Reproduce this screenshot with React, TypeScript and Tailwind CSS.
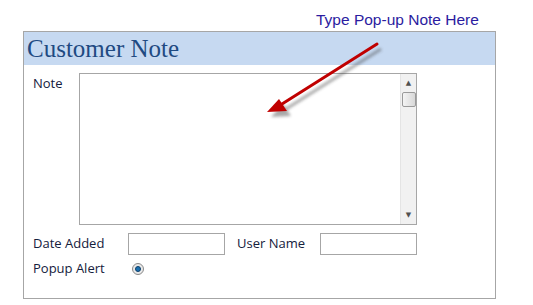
import React from 'react';

const labelFont = { fontFamily: '"Open Sans", "DejaVu Sans", sans-serif' };

const Arrow = () => (
  <svg className="absolute left-0 top-0 pointer-events-none" width="533" height="305" viewBox="0 0 533 305">
    <defs>
      <filter id="shadow" x="-20%" y="-20%" width="140%" height="140%">
        <feGaussianBlur stdDeviation="1.8" />
      </filter>
    </defs>
    <g transform="translate(4 5)" opacity="0.45" filter="url(#shadow)">
      <line x1="377" y1="44" x2="282" y2="104" stroke="#404040" strokeWidth="3" />
      <polygon points="267,112 279,99 287,111" fill="#404040" />
    </g>
    <line x1="377" y1="44" x2="282" y2="104" stroke="#c00000" strokeWidth="3" strokeLinecap="round" />
    <polygon points="267,112 279,99 287,111" fill="#c00000" />
  </svg>
);

const Scrollbar = () => (
  <div className="w-[16px] h-full bg-[#f1f1f1] border-l border-[#e4e4e4] flex flex-col items-center">
    <div className="h-[17px] flex items-center justify-center text-[7px] text-[#505050] mt-[1px]">▲</div>
    <div className="w-[14px] h-[15px] rounded-[2px] border border-[#9a9a9a] bg-gradient-to-r from-[#f4f4f4] to-[#d8d8d8]" />
    <div className="flex-1" />
    <div className="h-[17px] flex items-center justify-center text-[7px] text-[#505050]">▼</div>
  </div>
);

export default function App() {
  return (
    <div className="relative w-[533px] h-[305px] bg-white overflow-hidden">
      <div
        className="absolute left-[316px] top-[8px] text-[15.5px] text-[#2b1ca0]"
        style={{ fontFamily: '"Liberation Sans", Arial, sans-serif' }}
      >
        Type Pop-up Note Here
      </div>

      <div className="ml-[23px] pt-[31px]">
        <div className="w-[473px] h-[268px] border border-[#a6a6a6] flex flex-col">
          <div className="h-[33px] bg-[#c6d9f1] flex items-center px-[3px]">
            <span
              className="text-[25px] leading-none text-[#1f4a82]"
              style={{ fontFamily: '"Liberation Serif", "DejaVu Serif", serif' }}
            >
              Customer Note
            </span>
          </div>

          <div className="pl-[9px] pt-[8px] flex flex-col" style={labelFont}>
            <div className="flex">
              <div className="w-[46px] pt-[1px] text-[13px] text-[#14203c]">Note</div>
              <div className="w-[338px] h-[152px] border border-[#a6a6a6] bg-white flex justify-end">
                <Scrollbar />
              </div>
            </div>

            <div className="flex items-center mt-[8px] h-[22px]">
              <div className="w-[95px] text-[13px] text-[#14203c]">Date Added</div>
              <div className="w-[97px] h-[22px] border border-[#a6a6a6]" />
              <div className="w-[95px] pl-[12px] text-[13px] text-[#14203c]">User Name</div>
              <div className="w-[97px] h-[22px] border border-[#a6a6a6]" />
            </div>

            <div className="flex items-center mt-[3px] h-[22px]">
              <div className="w-[99px] text-[13px] text-[#14203c]">Popup Alert</div>
              <div className="w-[12px] h-[12px] rounded-full border border-[#8a8a8a] bg-[#e8e8e8] flex items-center justify-center">
                <div className="w-[6px] h-[6px] rounded-full bg-[#1a6fb0] border border-[#0d3f6a]" />
              </div>
            </div>
          </div>
        </div>
      </div>

      <Arrow />
    </div>
  );
}
